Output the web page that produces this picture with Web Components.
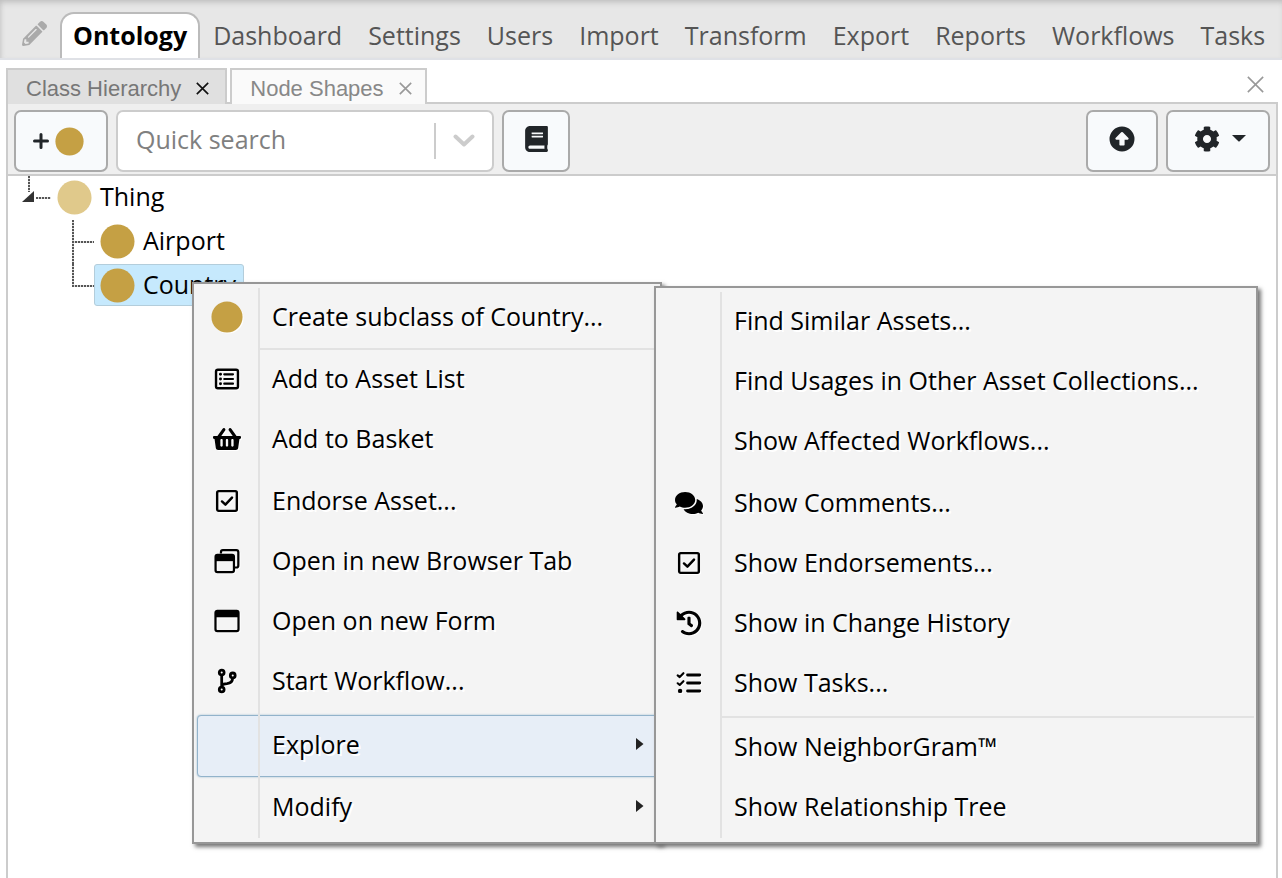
<!DOCTYPE html>
<html lang="en">
<head>
<meta charset="utf-8">
<title>Ontology</title>
<style>
  html, body { height: 100%; margin: 0; }
  body {
    font-family: "Open Sans", sans-serif;
    font-size: 25px;
    line-height: 36px;
    color: #000;
    background: #fff;
    overflow: hidden;
  }
</style>
</head>
<body>
<ontology-app></ontology-app>

<script>
const ICONS = {
  pencil: ['0 0 512 512', '<path d="M497.9 142.1l-46.1 46.1c-4.7 4.7-12.3 4.7-17 0l-111-111c-4.7-4.7-4.7-12.3 0-17l46.1-46.1c18.7-18.7 49.1-18.7 67.9 0l60.1 60.1c18.8 18.7 18.8 49.1 0 67.9zM284.2 99.8L21.6 362.4.4 483.9c-2.9 16.4 11.4 30.6 27.8 27.8l121.5-21.3 262.6-262.6c4.7-4.7 4.7-12.3 0-17l-111-111c-4.8-4.7-12.4-4.7-17.1 0zM124.1 339.9c-5.5-5.5-5.5-14.3 0-19.8l154-154c5.5-5.5 14.3-5.5 19.8 0s5.5 14.3 0 19.8l-154 154c-5.5 5.5-14.3 5.5-19.8 0zM88 424h48v36.3l-64.5 11.3-31.1-31.1L51.7 376H88v48z"/>'],
  book: ['0 0 448 512', '<path d="M448 360V24c0-13.3-10.7-24-24-24H96C43 0 0 43 0 96v320c0 53 43 96 96 96h328c13.3 0 24-10.7 24-24v-16c0-7.5-3.5-14.3-8.9-18.7-4.2-15.4-4.2-59.3 0-74.7 5.4-4.3 8.9-11.1 8.9-18.6zM128 134c0-3.3 2.7-6 6-6h212c3.3 0 6 2.7 6 6v20c0 3.3-2.7 6-6 6H134c-3.3 0-6-2.7-6-6v-20zm0 64c0-3.3 2.7-6 6-6h212c3.3 0 6 2.7 6 6v20c0 3.3-2.7 6-6 6H134c-3.3 0-6-2.7-6-6v-20zm253.4 250H96c-17.7 0-32-14.3-32-32 0-17.6 14.4-32 32-32h285.4c-1.9 17.1-1.9 46.9 0 64z"/>'],
  up: ['0 0 26 26', '<path fill-rule="evenodd" d="M13 .5a12.5 12.5 0 1 0 0 25a12.5 12.5 0 1 0 0-25zM12.2 6.3q.8-.8 1.6 0l5.6 5.8q1 1.4-.7 1.6H15.6v5q0 .8-.8.8h-3.6q-.8 0-.8-.8v-5H7.300q-1.700-.2-.7-1.600z"/>'],
  gear: ['0 0 512 512', '<path d="M487.4 315.7l-42.6-24.6c4.3-23.2 4.3-47 0-70.2l42.6-24.6c4.9-2.8 7.1-8.6 5.5-14-11.1-35.6-30-67.8-54.7-94.6-3.8-4.1-10-5.1-14.8-2.3L380.8 110c-17.9-15.4-38.5-27.3-60.8-35.1V25.8c0-5.6-3.9-10.5-9.4-11.7-36.7-8.2-74.3-7.8-109.2 0-5.5 1.2-9.4 6.1-9.4 11.7V75c-22.2 7.9-42.8 19.8-60.8 35.1L88.7 85.5c-4.9-2.8-11-1.9-14.8 2.3-24.7 26.7-43.6 58.9-54.7 94.6-1.7 5.4.6 11.2 5.5 14L67.3 221c-4.3 23.2-4.3 47 0 70.2l-42.6 24.6c-4.9 2.8-7.1 8.6-5.5 14 11.1 35.6 30 67.8 54.7 94.6 3.8 4.1 10 5.1 14.8 2.3l42.6-24.6c17.9 15.4 38.5 27.3 60.8 35.1v49.2c0 5.6 3.9 10.5 9.4 11.7 36.7 8.2 74.3 7.8 109.2 0 5.5-1.2 9.4-6.1 9.4-11.7v-49.2c22.2-7.9 42.8-19.8 60.8-35.1l42.6 24.6c4.9 2.8 11 1.900 14.800-2.300 24.700-26.700 43.600-58.900 54.700-94.600 1.500-5.500-.7-11.300-5.600-14.100zM256 336c-44.100 0-80-35.900-80-80s35.900-80 80-80 80 35.900 80 80-35.900 80-80 80z"/>'],
  plus: ['0 0 16 16', '<path d="M8 1.500v13M1.500 8h13" stroke="currentColor" stroke-width="3" stroke-linecap="round"/>'],
  dot: ['0 0 36 36', '<circle cx="18" cy="18" r="17.500"/>'],
  chevron: ['0 0 22 14', '<path d="M2.500 2.500L11 10.500L19.500 2.500" fill="none" stroke="currentColor" stroke-width="4" stroke-linecap="round" stroke-linejoin="round"/>'],
  caret: ['0 0 14 8', '<path d="M0 0h14L7.700 6.300q-.7.6-1.400 0z"/>'],
  right: ['0 0 8 12', '<path d="M0 0L7.500 6L0 12z"/>'],
  close: ['0 0 16 16', '<path d="M.8.8L15.200 15.200M15.200.8L.8 15.200" fill="none" stroke="currentColor" stroke-width="1.500"/>'],
  closeSmall: ['0 0 16 16', '<path d="M1 1L15 15M15 1L1 15" fill="none" stroke="currentColor" stroke-width="2"/>'],
  list: ['0 0 28 28', '<rect x="2.200" y="4" width="23.600" height="20" rx="2" fill="none" stroke="currentColor" stroke-width="2.600"/><path d="M11 9h9.500M11 14h9.500M11 19h9.500" stroke="currentColor" stroke-width="2.200" stroke-linecap="round"/><circle cx="7" cy="9" r="1.600"/><circle cx="7" cy="14" r="1.600"/><circle cx="7" cy="19" r="1.600"/>'],
  basket: ['0 0 576 512', '<path d="M576 216v16c0 13.255-10.745 24-24 24h-8l-26.113 182.788C514.509 462.435 494.257 480 470.370 480H105.630c-23.887 0-44.139-17.565-47.518-41.212L32 256h-8c-13.255 0-24-10.745-24-24v-16c0-13.255 10.745-24 24-24h67.341l106.780-146.821c10.395-14.292 30.407-17.453 44.701-7.058 14.293 10.395 17.453 30.408 7.058 44.701L170.477 192h235.046L326.120 82.821c-10.395-14.292-7.234-34.306 7.059-44.701 14.291-10.395 34.306-7.235 44.701 7.058L484.659 192H552c13.255 0 24 10.745 24 24zM312 392V280c0-13.255-10.745-24-24-24s-24 10.745-24 24v112c0 13.255 10.745 24 24 24s24-10.745 24-24zm112 0V280c0-13.255-10.745-24-24-24s-24 10.745-24 24v112c0 13.255 10.745 24 24 24s24-10.745 24-24zm-224 0V280c0-13.255-10.745-24-24-24s-24 10.745-24 24v112c0 13.255 10.745 24 24 24s24-10.745 24-24z"/>'],
  check: ['0 0 28 28', '<rect x="3.400" y="3.400" width="21.200" height="21.200" rx="1.600" fill="none" stroke="currentColor" stroke-width="2.600"/><path d="M8.600 14.500L12.300 18L19.400 10.300" fill="none" stroke="currentColor" stroke-width="2.700" stroke-linecap="round" stroke-linejoin="round"/>'],
  windows: ['0 0 28 28', '<path d="M7.500 6V4.500Q7.500 2.200 9.500 2.200H24Q26.200 2.200 26.200 4.600V18.500Q26.200 21 24.200 21H21.500" fill="none" stroke="currentColor" stroke-width="2.400"/><rect x="1.700" y="7.400" width="19.800" height="18.600" rx="2" fill="none" stroke="currentColor" stroke-width="2.400"/><path d="M2 8h19v6.200H2z"/>'],
  window: ['0 0 28 28', '<rect x="1.600" y="3" width="24.800" height="22" rx="2" fill="none" stroke="currentColor" stroke-width="2.400"/><path d="M2 4h24v6H2z"/>'],
  branch: ['0 0 28 28', '<g fill="none" stroke="currentColor" stroke-width="3"><circle cx="8.300" cy="4.800" r="2.600"/><circle cx="8.300" cy="23.200" r="2.600"/><circle cx="20.200" cy="8" r="2.600"/><path d="M8.300 8v12M8.300 18.500Q10 17 14 16.800Q20 16.200 20 11"/></g>'],
  comments: ['0 0 576 512', '<path d="M416 192c0-88.400-93.100-160-208-160S0 103.600 0 192c0 34.300 14.100 65.900 38 92-13.400 30.200-35.500 54.200-35.800 54.500-2.200 2.300-2.800 5.700-1.500 8.700S4.800 352 8 352c36.600 0 66.900-12.300 88.700-25 32.200 15.700 70.300 25 111.300 25 114.900 0 208-71.600 208-160zm122 220c23.900-26 38-57.700 38-92 0-66.900-53.500-124.200-129.300-148.100.9 6.600 1.300 13.300 1.300 20.100 0 105.900-107.700 192-240 192-10.800 0-21.300-.8-31.700-1.900C207.800 439.600 281.800 480 368 480c41 0 79.100-9.200 111.300-25 21.800 12.700 52.100 25 88.700 25 3.200 0 6.100-1.900 7.300-4.800 1.300-2.900.7-6.300-1.500-8.700-.3-.3-22.400-24.200-35.800-54.500z"/>'],
  history: ['-6 -6 524 524', '<path d="M504 255.531c.253 136.640-111.180 248.372-247.820 248.468-59.015.042-113.223-20.530-155.822-54.911-11.077-8.940-11.905-25.541-1.839-35.607l11.267-11.267c8.609-8.609 22.353-9.551 31.891-1.984C173.062 425.135 212.781 440 256 440c101.705 0 184-82.311 184-184 0-101.705-82.311-184-184-184-48.814 0-93.149 18.969-126.068 49.932l50.754 50.754c10.080 10.080 2.941 27.314-11.313 27.314H24c-8.837 0-16-7.163-16-16V38.627c0-14.254 17.234-21.393 27.314-11.314l49.372 49.372C129.209 34.136 189.552 8 256 8c136.810 0 247.747 110.780 248 247.531zm-180.912 78.784l9.823-12.630c8.138-10.463 6.253-25.542-4.210-33.679L288 256.349V152c0-13.255-10.745-24-24-24h-16c-13.255 0-24 10.745-24 24v135.651l65.409 50.874c10.463 8.137 25.541 6.253 33.679-4.210z"/>'],
  tasks: ['0 0 28 28', '<path d="M12.500 5.500h13M12.500 14h13M12.500 22.500h13" stroke="currentColor" stroke-width="3.200" stroke-linecap="round"/><path d="M1.800 5.800L4 7.600L8 3.400M1.800 14.300L4 16.100L8 12" fill="none" stroke="currentColor" stroke-width="2.300" stroke-linecap="round" stroke-linejoin="round"/><circle cx="4.400" cy="22.500" r="2.400"/>'],
};

function define(name, html, setup) {
  const template = document.createElement('template');
  template.innerHTML = html;
  customElements.define(name, class extends HTMLElement {
    connectedCallback() {
      if (this.shadowRoot) return;
      const root = this.attachShadow({ mode: 'open' });
      root.append(template.content.cloneNode(true));
      if (setup) setup(this, root);
    }
  });
}

/* Inline icon; its size comes from the custom properties --w and --h. */
define('app-icon', `
<style>
  :host { display: inline-flex; flex: none; width: var(--w, 28px); height: var(--h, 28px); }
  svg { width: 100%; height: 100%; display: block; fill: currentColor; }
</style>
<svg aria-hidden="true"></svg>`, (el, root) => {
  const [box, shapes] = ICONS[el.getAttribute('name')];
  const svg = root.querySelector('svg');
  svg.setAttribute('viewBox', box);
  svg.innerHTML = shapes;
});

define('nav-item', `
<style>
  :host { display: block; flex: none; }
  a {
    display: block; height: 44px; line-height: 43px; padding: 0 13px;
    font-size: 25px; color: #555; text-decoration: none; white-space: nowrap;
    border-top: 2px solid transparent;
  }
  :host([active]) a {
    color: #000; font-weight: 700; background: #fff; padding: 0 11px;
    border: 2px solid #bbb; border-bottom: 0; border-radius: 14px 14px 0 0;
  }
</style>
<a href="#"><slot></slot></a>`);

define('top-nav', `
<style>
  :host {
    display: block; background: #e7e7e7; border-bottom: 2px solid #dfe1e6;
    box-shadow: inset 0 5px 6px -3px #bbb, inset 4px 0 5px -3px #ccc;
  }
  nav { display: flex; padding: 12px 0 0 22px; height: 46px; }
  button { border: 0; background: none; padding: 0; margin: 9px 13px 0 0; color: #aaa; height: 26px; --w: 25px; --h: 25px; }
</style>
<nav aria-label="Main">
  <button type="button" aria-label="Edit"><app-icon name="pencil"></app-icon></button>
  <slot></slot>
</nav>`);

define('panel-tab', `
<style>
  :host {
    display: flex; align-items: center; height: 34px; margin-right: 3px; margin-bottom: -2px;
    border: 2px solid #ccc; border-bottom: 0; background: #fafafa; color: #888;
    font-family: "Liberation Sans", sans-serif; font-size: 22px; line-height: 28px;
    --x: #999;
  }
  :host([active]) { background: #e0e0e0; color: #777; --x: #111; }
  a { padding: 4px 0 0 18px; color: inherit; text-decoration: none; }
  button { border: 0; background: none; padding: 0; margin: 3px 13px 0 15px; height: 13px; color: var(--x); --w: 13px; --h: 13px; }
  :host([active]) button { margin-right: 16px; }
</style>
<a href="#"><slot></slot></a>
<button type="button" aria-label="Close tab"><app-icon name="closeSmall"></app-icon></button>`);

define('panel-tabs', `
<style>
  :host { display: flex; height: 34px; border-bottom: 2px solid #ccc; }
  button { border: 0; background: none; padding: 0; margin: 8px 14px 0 auto; height: 17px; color: #999; --w: 17px; --h: 17px; }
</style>
<slot></slot>
<button type="button" aria-label="Close panel"><app-icon name="close"></app-icon></button>`);

define('tool-button', `
<style>
  :host { display: block; flex: none; }
  button {
    display: flex; align-items: center; justify-content: center; gap: 6px; width: 100%; height: 62px;
    padding: 0 0 5px; border: 2px solid #aaa; border-radius: 7px; background: #f8fafc; color: #212529;
  }
  :host([low]) button { padding: 0 5px 0 0; }
</style>
<button type="button"><slot></slot></button>`, (el, root) =>
  root.querySelector('button').setAttribute('aria-label', el.getAttribute('label')));

define('search-box', `
<style>
  :host {
    display: flex; align-items: center; box-sizing: border-box; height: 62px; width: 378px;
    border: 2px solid #ccc; border-radius: 7px; background: #fff;
  }
  input {
    flex: 1; min-width: 0; height: 52px; padding: 0 18px; margin-bottom: 4px; box-sizing: border-box;
    border: 0; outline: 0; background: none; font: inherit; color: #333;
  }
  input::placeholder { color: #808080; opacity: 1; }
  button {
    height: 36px; width: 58px; padding: 0; border: 0; border-left: 2px solid #ccc; background: none;
    display: flex; align-items: center; justify-content: center; color: #ccc; --w: 22px; --h: 14px;
  }
</style>
<input type="text" placeholder="Quick search" aria-label="Quick search">
<button type="button" aria-label="Open suggestions"><app-icon name="chevron"></app-icon></button>`);

define('tool-bar', `
<style>
  :host {
    display: flex; align-items: center; gap: 8px; padding: 6px 6px 2px; height: 62px;
    background: #efefef; border-bottom: 2px solid #ccc;
  }
</style>
<slot></slot>`);

define('tree-node', `
<style>
  :host { display: block; --dots: #555 0 2px, #ddd 2px 3px; }
  .row { display: flex; height: 44px; align-items: flex-start; }
  .guide { position: relative; flex: none; width: 22px; height: 44px; }
  .guide::before, .guide::after { content: ""; position: absolute; }
  .guide::before { left: 0; top: 0; width: 2px; height: 44px; background: repeating-linear-gradient(180deg, var(--dots)); }
  .guide::after { left: 0; right: 0; top: 21px; height: 2px; background: repeating-linear-gradient(90deg, var(--dots)); }
  :host([last]) .guide::before { height: 22px; }
  :host([root]) .guide { width: 43px; }
  :host([root]) .guide::before { left: 20px; height: 16px; }
  :host([root]) .guide::after { left: 28px; }
  .toggle { display: none; }
  :host([root]) .toggle {
    display: block; position: absolute; left: 14px; top: 15px; width: 12px; height: 11px; padding: 0;
    border: 0; background: #333; clip-path: polygon(100% 0, 100% 100%, 0 100%);
  }
  a {
    display: flex; align-items: center; gap: 8px; height: 40px; padding: 0 7px 0 5px;
    border: 1px solid transparent; border-radius: 3px; color: #000; text-decoration: none;
  }
  :host([selected]) a { background: #c6e9fd; border-color: #b3cddb; }
  .label { padding-bottom: 2px; }
  app-icon { color: #c5a044; --w: 35px; --h: 35px; }
  :host([root]) app-icon { color: #e0c98b; }
  .children { padding-left: 64px; }
</style>
<div class="row">
  <span class="guide"><button class="toggle" type="button" aria-label="Collapse"></button></span>
  <a href="#"><app-icon name="dot"></app-icon><span class="label"></span></a>
</div>
<div class="children"><slot></slot></div>`, (el, root) => {
  root.querySelector('.label').textContent = el.getAttribute('label');
});

define('menu-item', `
<style>
  :host { display: block; }
  button {
    display: grid; grid-template-columns: 62px 1fr auto; align-items: center; width: 100%; height: 60px;
    padding: 0 14px 4px 0; border: 0; background: none; color: #000; font: inherit; text-align: left;
    text-shadow: 2px 2px 0 #fff;
  }
  :host([tall]) button { height: 62px; padding-bottom: 2px; }
  :host([selected]) { padding: 3px 0 1px 1px; }
  :host([selected]) button {
    height: 62px; background: #e7eef7; border: 1px solid #92b3cb; border-radius: 4px;
    box-shadow: 0 0 2px #92b3cb; padding: 0 13px 4px 0;
    grid-template-columns: 60px 1fr auto;
  }
  .icon { display: flex; justify-content: center; padding-top: 2px; filter: drop-shadow(1px 1px 0 #fff); }
  .icon app-icon { --h: 26px; --w: 28px; }
  .icon app-icon[name="dot"] { color: #c5a044; --w: 32px; --h: 32px; }
  .text { padding-left: 14px; white-space: nowrap; }
  .arrow { --w: 8px; --h: 12px; color: #222; display: flex; }
</style>
<button type="button" role="menuitem"><span class="icon"></span><span class="text"><slot></slot></span><span class="arrow"></span></button>`,
(el, root) => {
  const add = (where, name) => {
    const icon = document.createElement('app-icon');
    icon.setAttribute('name', name);
    root.querySelector(where).append(icon);
  };
  if (el.hasAttribute('icon')) add('.icon', el.getAttribute('icon'));
  if (el.hasAttribute('submenu')) add('.arrow', 'right');
});

define('menu-separator', `
<style>:host { display: block; height: 2px; margin-left: 64px; background: #e2e2e2; }</style>`);

define('context-menu', `
<style>
  :host {
    display: block; position: absolute; box-sizing: border-box; padding: 2px 2px 4px;
    background: #f4f4f4; border: 2px solid #979797; box-shadow: 3px 3px 4px #777;
  }
  /* Line between the icon column and the labels, over the rows. */
  :host::after {
    content: ""; position: absolute; left: 64px; top: 4px; bottom: 4px; width: 2px;
    background: #e2e2e2; pointer-events: none;
  }
</style>
<slot></slot>`, el => el.setAttribute('role', 'menu'));

define('ontology-app', `
<style>
  :host { display: flex; flex-direction: column; min-height: 100%; position: relative; }
  main { display: flex; flex-direction: column; flex: 1; margin: 8px 4px 0 6px; }
  .body { flex: 1; border: 2px solid #ccc; border-width: 0 2px; }
  .main { left: 192px; top: 282px; width: 470px; }
  .sub { left: 654px; top: 286px; width: 604px; padding-top: 4px; }
  .sub menu-separator { margin-top: 2px; }
  .add { width: 94px; }
  .add app-icon[name="plus"] { --w: 16px; --h: 16px; }
  .add app-icon[name="dot"] { --w: 29px; --h: 29px; color: #c5a044; }
  .bk { width: 68px; --w: 23px; --h: 26px; }
  .end { margin-left: auto; width: 72px; --w: 26px; --h: 26px; }
  .set { width: 104px; --w: 26px; --h: 26px; }
  .set app-icon[name="gear"] { margin-left: 4px; }
  .set app-icon[name="caret"] { --w: 14px; --h: 8px; margin-left: 6px; }
</style>
<top-nav>
  <nav-item active>Ontology</nav-item>
  <nav-item>Dashboard</nav-item>
  <nav-item>Settings</nav-item>
  <nav-item>Users</nav-item>
  <nav-item>Import</nav-item>
  <nav-item>Transform</nav-item>
  <nav-item>Export</nav-item>
  <nav-item>Reports</nav-item>
  <nav-item>Workflows</nav-item>
  <nav-item>Tasks</nav-item>
</top-nav>
<main>
  <panel-tabs>
    <panel-tab active>Class Hierarchy</panel-tab>
    <panel-tab>Node Shapes</panel-tab>
  </panel-tabs>
  <div class="body">
    <tool-bar>
      <tool-button class="add" label="Create class" low><app-icon name="plus"></app-icon><app-icon name="dot"></app-icon></tool-button>
      <search-box></search-box>
      <tool-button class="bk" label="Documentation"><app-icon name="book"></app-icon></tool-button>
      <tool-button class="end" label="Go up"><app-icon name="up"></app-icon></tool-button>
      <tool-button class="set" label="Settings"><app-icon name="gear"></app-icon><app-icon name="caret"></app-icon></tool-button>
    </tool-bar>
    <tree-node root label="Thing">
      <tree-node label="Airport"></tree-node>
      <tree-node label="Country" last selected></tree-node>
    </tree-node>
  </div>
</main>
<context-menu class="main">
  <menu-item icon="dot" tall>Create subclass of Country...</menu-item>
  <menu-separator></menu-separator>
  <menu-item icon="list">Add to Asset List</menu-item>
  <menu-item icon="basket">Add to Basket</menu-item>
  <menu-item icon="check" tall>Endorse Asset...</menu-item>
  <menu-item icon="windows">Open in new Browser Tab</menu-item>
  <menu-item icon="window">Open on new Form</menu-item>
  <menu-item icon="branch">Start Workflow...</menu-item>
  <menu-item submenu selected>Explore</menu-item>
  <menu-item submenu>Modify</menu-item>
</context-menu>
<context-menu class="sub">
  <menu-item>Find Similar Assets...</menu-item>
  <menu-item>Find Usages in Other Asset Collections...</menu-item>
  <menu-item>Show Affected Workflows...</menu-item>
  <menu-item icon="comments" tall>Show Comments...</menu-item>
  <menu-item icon="check">Show Endorsements...</menu-item>
  <menu-item icon="history">Show in Change History</menu-item>
  <menu-item icon="tasks">Show Tasks...</menu-item>
  <menu-separator></menu-separator>
  <menu-item>Show NeighborGram™</menu-item>
  <menu-item>Show Relationship Tree</menu-item>
</context-menu>`);
</script>
</body>
</html>
